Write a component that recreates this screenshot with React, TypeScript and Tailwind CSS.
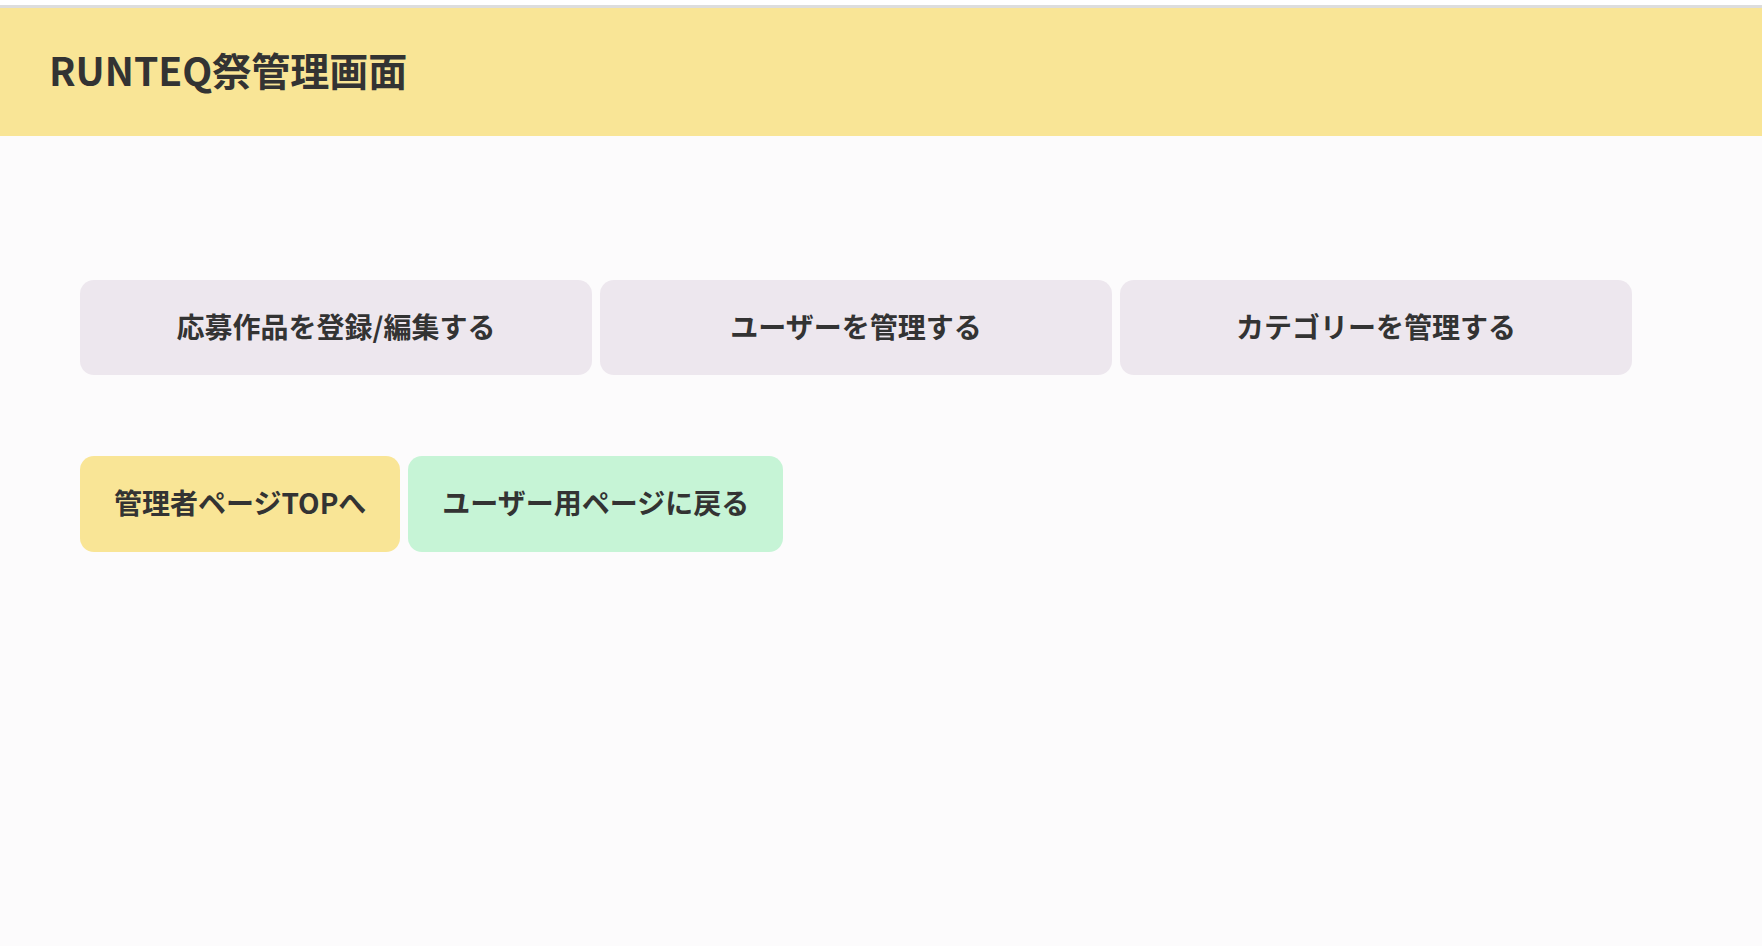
import React from "react";

const font = { fontFamily: '"Noto Sans CJK JP", "Noto Sans", sans-serif' };

export default function App() {
  const menu = ["応募作品を登録/編集する", "ユーザーを管理する", "カテゴリーを管理する"];

  return (
    <div className="min-h-[946px] bg-[#fcfbfc] text-[#333333]" style={font}>
      <div className="bg-white pt-[5px]">
        <header className="h-[131px] border-t-[3px] border-[#dddddd] bg-[#f9e596] flex items-center pl-[49px] pb-[5px]">
          <h1 className="text-[39px] font-bold leading-none">RUNTEQ祭管理画面</h1>
        </header>
      </div>

      <main className="pt-[144px] pl-[80px]">
        {/* Admin menu */}
        <div className="flex gap-2">
          {menu.map((label) => (
            <button
              key={label}
              className="w-[512px] h-[95px] pb-[4px] rounded-[14px] bg-[#ede7ee] text-[28px] font-bold flex items-center justify-center"
            >
              {label}
            </button>
          ))}
        </div>

        {/* Navigation */}
        <div className="flex gap-2 mt-[81px]">
          <button className="h-[96px] px-[34px] pb-[4px] rounded-[14px] bg-[#f9e596] text-[28px] font-bold flex items-center">
            管理者ページTOPへ
          </button>
          <button className="h-[96px] px-[34px] pb-[4px] rounded-[14px] bg-[#c6f4d6] text-[28px] font-bold flex items-center">
            ユーザー用ページに戻る
          </button>
        </div>
      </main>
    </div>
  );
}
